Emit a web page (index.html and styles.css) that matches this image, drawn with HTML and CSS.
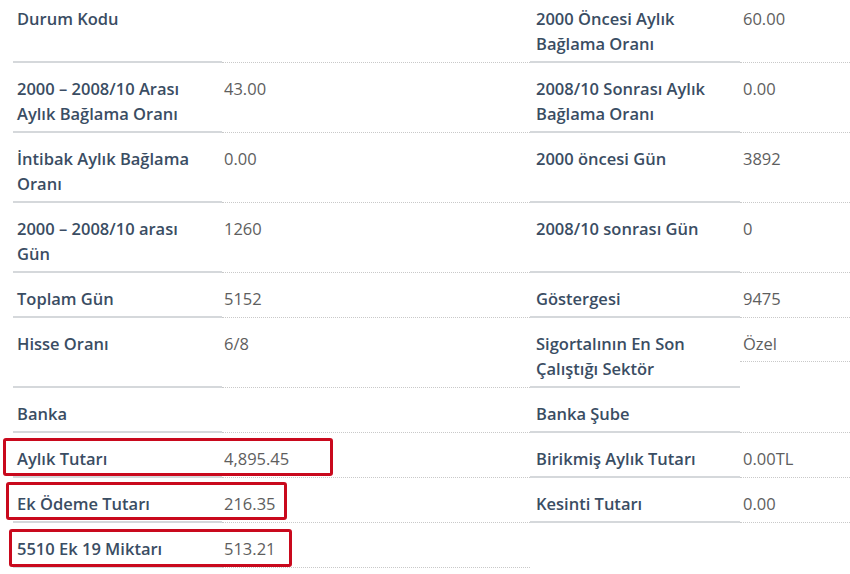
FILE: index.html
```html
<!DOCTYPE html>
<html lang="tr">
<head>
<meta charset="utf-8">
<title>Aylık Bilgileri</title>
<link rel="stylesheet" href="styles.css">
</head>
<body>
<div class="sheet">
  <div class="row">
    <div class="pair left"><div class="k">Durum Kodu</div><div class="v"></div></div>
    <div class="pair right"><div class="k">2000 Öncesi Aylık Bağlama Oranı</div><div class="v">60.00</div></div>
  </div>
  <div class="row">
    <div class="pair left"><div class="k">2000 – 2008/10 Arası Aylık Bağlama Oranı</div><div class="v">43.00</div></div>
    <div class="pair right"><div class="k">2008/10 Sonrası Aylık Bağlama Oranı</div><div class="v">0.00</div></div>
  </div>
  <div class="row">
    <div class="pair left"><div class="k">İntibak Aylık Bağlama Oranı</div><div class="v">0.00</div></div>
    <div class="pair right"><div class="k">2000 öncesi Gün</div><div class="v">3892</div></div>
  </div>
  <div class="row">
    <div class="pair left"><div class="k">2000 – 2008/10 arası Gün</div><div class="v">1260</div></div>
    <div class="pair right"><div class="k">2008/10 sonrası Gün</div><div class="v">0</div></div>
  </div>
  <div class="row">
    <div class="pair left"><div class="k">Toplam Gün</div><div class="v">5152</div></div>
    <div class="pair right"><div class="k">Göstergesi</div><div class="v">9475</div></div>
  </div>
  <div class="row">
    <div class="pair left"><div class="k">Hisse Oranı</div><div class="v">6/8</div></div>
    <div class="pair right"><div class="k">Sigortalının En Son Çalıştığı Sektör</div><div class="v short">Özel</div></div>
  </div>
  <div class="row">
    <div class="pair left"><div class="k">Banka</div><div class="v"></div></div>
    <div class="pair right"><div class="k">Banka Şube</div><div class="v"></div></div>
  </div>
  <div class="row">
    <div class="pair left"><span class="mark mark-1"></span><div class="k">Aylık Tutarı</div><div class="v">4,895.45</div></div>
    <div class="pair right"><div class="k">Birikmiş Aylık Tutarı</div><div class="v">0.00TL</div></div>
  </div>
  <div class="row">
    <div class="pair left"><span class="mark mark-2"></span><div class="k">Ek Ödeme Tutarı</div><div class="v">216.35</div></div>
    <div class="pair right"><div class="k">Kesinti Tutarı</div><div class="v">0.00</div></div>
  </div>
  <div class="row">
    <div class="pair left"><span class="mark mark-3"></span><div class="k">5510 Ek 19 Miktarı</div><div class="v">513.21</div></div>
  </div>
</div>
</body>
</html>
```
FILE: styles.css
```css
html, body {
  margin: 0;
  padding: 0;
  background: #ffffff;
  overflow: hidden;
}
body {
  font-family: "Open Sans", "Noto Sans", sans-serif;
  font-size: 16.5px;
  line-height: 25px;
}
.sheet {
  margin-top: -7px;
  padding-left: 13px;
}
.row {
  display: flex;
}
.pair {
  display: flex;
  position: relative;
}
.pair.left {
  width: 517px;
  flex: none;
}
.pair.right {
  flex: 1;
}
.k {
  box-sizing: border-box;
  padding: 13px 10px 5px 4px;
  color: #3a4d63;
  font-weight: 600;
  border-bottom: 2px solid #d5d8db;
}
.v {
  box-sizing: border-box;
  padding: 13px 6px 5px 2px;
  color: #5e5e5e;
  border-bottom: 1px dotted #c9c9c9;
}
.left .k { width: 209px; }
.left .v { width: 308px; }
.right .k { width: 210px; padding-left: 6px; }
.right .v { flex: 1; padding-left: 3px; }
.v.short { align-self: flex-start; }
.mark {
  position: absolute;
  box-sizing: border-box;
  border: 3px solid #c9091d;
  border-radius: 3px;
}
.mark-1 { left: -10px; top: 5px; width: 330px; height: 38px; }
.mark-2 { left: -7px; top: 4px; width: 281px; height: 38px; }
.mark-3 { left: -4px; top: 6px; width: 283px; height: 38px; }
```
